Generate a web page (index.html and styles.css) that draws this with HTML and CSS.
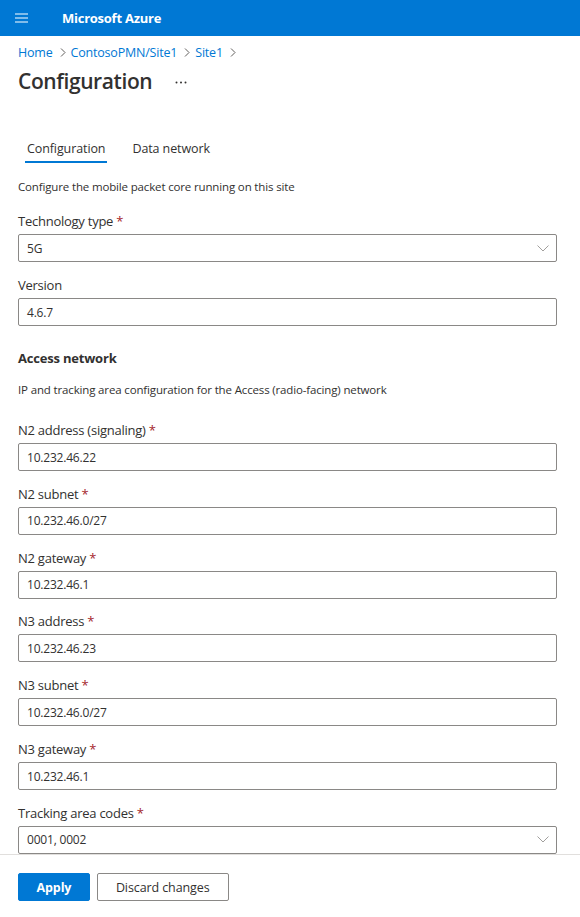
FILE: index.html
```html
<!DOCTYPE html>
<html>
<head>
<meta charset="utf-8">
<link rel="stylesheet" href="styles.css">
</head>
<body>
<header class="topbar">
  <span class="hamburger"><svg width="13" height="10" viewBox="0 0 13 10"><path d="M0 1h13M0 5h13M0 9h13" stroke="#fff" stroke-width="1.2"/></svg></span>
  <span class="brand">Microsoft Azure</span>
</header>
<main class="content">
  <nav class="crumbs">
    <a>Home</a><svg class="sep" width="6" height="9" viewBox="0 0 6 9"><path d="M1 0.5l4 4-4 4" fill="none" stroke="#605e5c" stroke-width="1"/></svg><a>ContosoPMN/Site1</a><svg class="sep" width="6" height="9" viewBox="0 0 6 9"><path d="M1 0.5l4 4-4 4" fill="none" stroke="#605e5c" stroke-width="1"/></svg><a>Site1</a><svg class="sep" width="6" height="9" viewBox="0 0 6 9"><path d="M1 0.5l4 4-4 4" fill="none" stroke="#605e5c" stroke-width="1"/></svg>
  </nav>
  <div class="titlerow">
    <h1 class="title">Configuration</h1>
    <svg class="more" width="12" height="3" viewBox="0 0 12 3"><circle cx="1.5" cy="1.5" r="1" fill="#323130"/><circle cx="6" cy="1.5" r="1" fill="#323130"/><circle cx="10.5" cy="1.5" r="1" fill="#323130"/></svg>
  </div>
  <div class="tabs">
    <span class="tab active">Configuration</span>
    <span class="tab">Data network</span>
  </div>
  <p class="desc first">Configure the mobile packet core running on this site</p>
  <div class="field">
    <label class="label">Technology type <span class="req">*</span></label>
    <div class="box select">5G<svg class="chev" width="12" height="7" viewBox="0 0 12 7"><path d="M0.5 0.5l5.5 5.5 5.5-5.5" fill="none" stroke="#a19f9d" stroke-width="1"/></svg></div>
  </div>
  <div class="field">
    <label class="label">Version</label>
    <div class="box">4.6.7</div>
  </div>
  <h2 class="section">Access network</h2>
  <p class="desc">IP and tracking area configuration for the Access (radio-facing) network</p>
  <div class="field gapped">
    <label class="label">N2 address (signaling) <span class="req">*</span></label>
    <div class="box">10.232.46.22</div>
  </div>
  <div class="field">
    <label class="label">N2 subnet <span class="req">*</span></label>
    <div class="box">10.232.46.0/27</div>
  </div>
  <div class="field">
    <label class="label">N2 gateway <span class="req">*</span></label>
    <div class="box">10.232.46.1</div>
  </div>
  <div class="field">
    <label class="label">N3 address <span class="req">*</span></label>
    <div class="box">10.232.46.23</div>
  </div>
  <div class="field">
    <label class="label">N3 subnet <span class="req">*</span></label>
    <div class="box">10.232.46.0/27</div>
  </div>
  <div class="field">
    <label class="label">N3 gateway <span class="req">*</span></label>
    <div class="box">10.232.46.1</div>
  </div>
  <div class="field">
    <label class="label">Tracking area codes <span class="req">*</span></label>
    <div class="box select">0001, 0002<svg class="chev" width="12" height="7" viewBox="0 0 12 7"><path d="M0.5 0.5l5.5 5.5 5.5-5.5" fill="none" stroke="#a19f9d" stroke-width="1"/></svg></div>
  </div>
</main>
<footer class="footer">
  <button class="btn primary">Apply</button>
  <button class="btn">Discard changes</button>
</footer>
</body>
</html>
```
FILE: styles.css
```css
html, body {
  margin: 0;
  padding: 0;
  background: #fff;
  font-family: "Open Sans", "Noto Sans", sans-serif;
  color: #323130;
  height: 917px;
  overflow: hidden;
}
.topbar {
  height: 36px;
  background: #0078d4;
  display: flex;
  align-items: center;
}
.hamburger {
  display: flex;
  margin-left: 15px;
  width: 13px;
}
.brand {
  margin-left: 34px;
  color: #fff;
  font-weight: 700;
  font-size: 13px;
  letter-spacing: -0.25px;
}
.content {
  padding: 0 23px 0 18px;
  height: 818px;
  overflow: hidden;
  border-bottom: 1px solid #e1dfdd;
}
.crumbs {
  margin-top: 8px;
  height: 17px;
  font-size: 12.5px;
  display: flex;
  align-items: center;
  color: #0078d4;
  letter-spacing: -0.2px;
}
.crumbs a { color: #0078d4; }
.crumbs .sep {
  margin: 0 5px 0 7px;
}
.titlerow {
  display: flex;
  align-items: center;
  height: 30px;
  margin-top: 5px;
}
.title {
  margin: 0;
  font-size: 21px;
  font-weight: 600;
  color: #323130;
  letter-spacing: -0.4px;
}
.more {
  margin-left: 23px;
  margin-top: 3px;
}
.tabs {
  display: flex;
  margin-top: 40px;
  margin-left: 7px;
  height: 27px;
  gap: 23px;
}
.tab {
  font-size: 12.5px;
  color: #323130;
  padding: 0 2px;
  display: flex;
  align-items: center;
  height: 25px;
  letter-spacing: -0.1px;
}
.tab.active {
  border-bottom: 2px solid #0078d4;
}
.desc {
  margin: 0;
  font-size: 11.5px;
  color: #323130;
  letter-spacing: -0.15px;
}
.desc.first { margin-top: 16px; }
.field {
  margin-top: 19px;
}
.field + .field { margin-top: 15px; }
.field.gapped { margin-top: 25px; }
.field.gapped ~ .field { margin-top: 14.84px; }
.label {
  display: block;
  font-size: 13px;
  line-height: 17px;
  color: #323130;
  letter-spacing: -0.25px;
  margin-bottom: 4px;
}
.req { color: #a4262c; }
.box {
  box-sizing: border-box;
  height: 28px;
  border: 1px solid #8a8886;
  border-radius: 2px;
  padding: 0 8px;
  font-size: 12px;
  display: flex;
  align-items: center;
  letter-spacing: -0.2px;
  color: #323130;
}
.select { justify-content: space-between; }
.chev { margin-right: -1px; }
.section {
  margin: 23px 0 0;
  font-size: 13px;
  font-weight: 700;
  color: #323130;
  letter-spacing: -0.2px;
}
.section + .desc { margin-top: 15px; }
.footer {
  display: flex;
  gap: 7px;
  padding: 18px 18px 0;
}
.btn {
  height: 28px;
  box-sizing: border-box;
  border: 1px solid #8a8886;
  border-radius: 2px;
  background: #fff;
  color: #323130;
  font-family: "Open Sans", sans-serif;
  font-size: 12.5px;
  font-weight: 400;
  padding: 0 18px;
  letter-spacing: -0.1px;
}
.btn.primary {
  background: #0078d4;
  border-color: #0078d4;
  color: #fff;
  padding: 0 17.5px;
  font-weight: 700;
}
```
